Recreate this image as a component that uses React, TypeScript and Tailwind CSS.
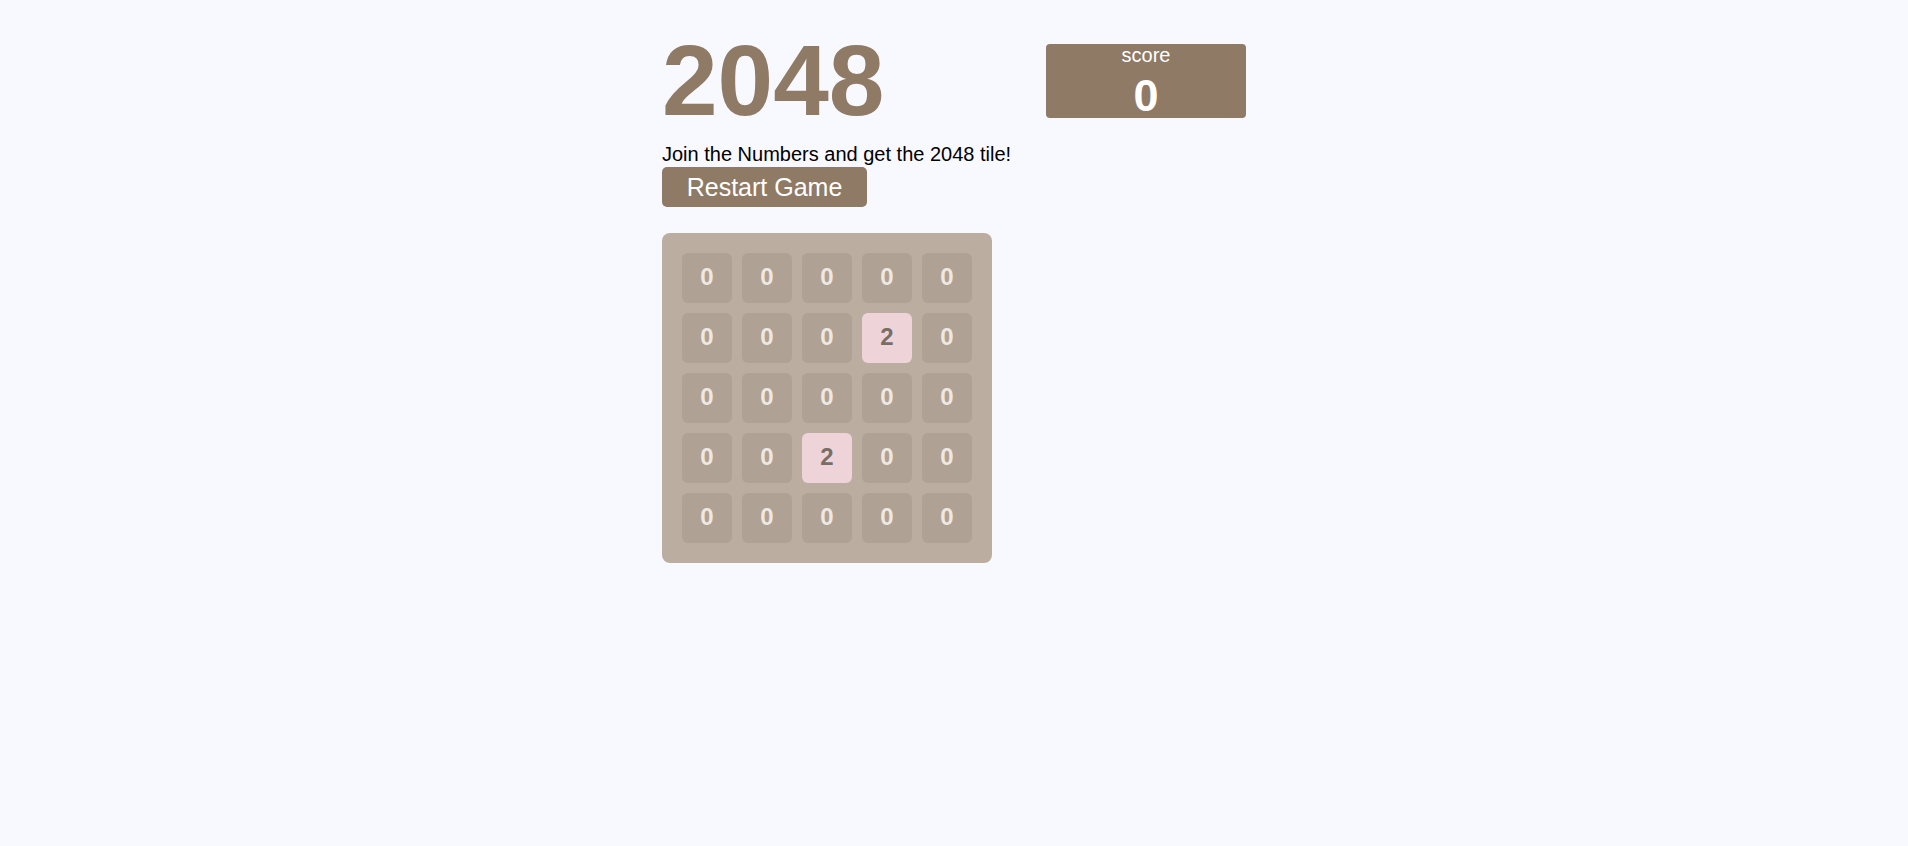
import React from "react";

const board: number[][] = [
  [0, 0, 0, 0, 0],
  [0, 0, 0, 2, 0],
  [0, 0, 0, 0, 0],
  [0, 0, 2, 0, 0],
  [0, 0, 0, 0, 0],
];

function Tile({ value }: { value: number }) {
  if (value === 2) {
    return (
      <div className="w-[50px] h-[50px] pb-[3px] rounded-[6px] bg-[#eed3d9] flex items-center justify-center text-[24px] leading-none font-bold text-[#776e65]">
        {value}
      </div>
    );
  }
  return (
    <div className="w-[50px] h-[50px] pb-[3px] rounded-[6px] bg-[#afa194] flex items-center justify-center text-[24px] leading-none font-bold text-[#efe8e1]">
      {value}
    </div>
  );
}

export default function App() {
  return (
    <div className="min-h-screen bg-[#f8f8ff] font-['Liberation_Sans',Arial,sans-serif]">
      <div className="w-[584px] mx-auto pt-[30px]">
        {/* Header */}
        <div className="flex justify-between items-start">
          <h1 className="text-[100px] leading-none font-bold text-[#8f7a66]">2048</h1>
          <div className="mt-[14px] w-[200px] h-[74px] pt-[1px] rounded-[4px] bg-[#8f7a66] text-white flex flex-col items-center">
            <div className="text-[20px] leading-none">score</div>
            <div className="mt-[8px] text-[45px] leading-none font-bold">0</div>
          </div>
        </div>

        <p className="mt-[13px] text-[20px] leading-[23px] text-black">
          Join the Numbers and get the 2048 tile!
        </p>
        <button className="mt-[1px] w-[205px] h-[40px] rounded-[5px] bg-[#8f7a66] text-white text-[25px] leading-[40px]">
          Restart Game
        </button>

        {/* Board */}
        <div className="mt-[26px] w-[330px] h-[330px] p-[20px] rounded-[8px] bg-[#bbada0] grid grid-cols-5 gap-[10px]">
          {board.flat().map((v, i) => (
            <Tile key={i} value={v} />
          ))}
        </div>
      </div>
    </div>
  );
}
